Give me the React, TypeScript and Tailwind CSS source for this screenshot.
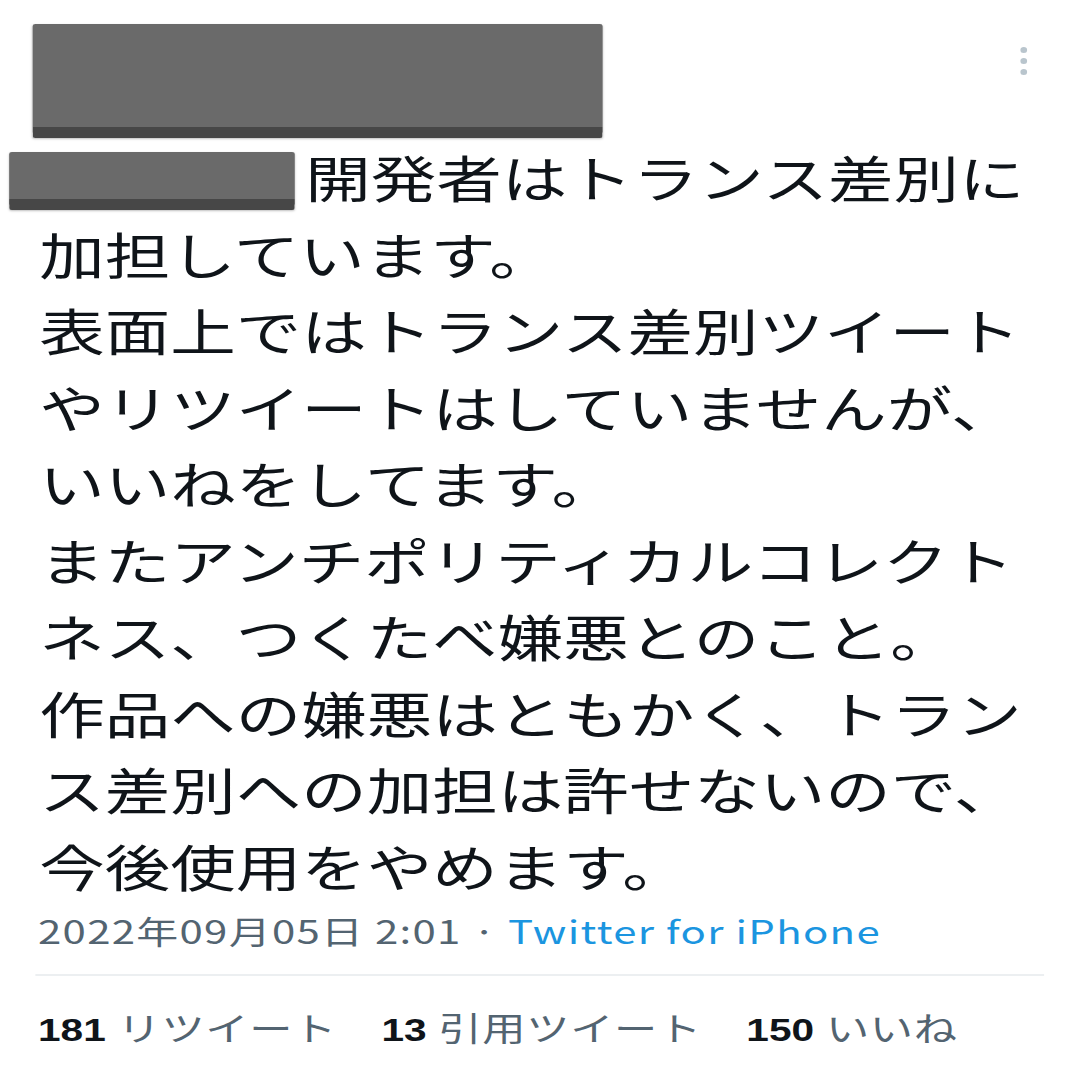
import React from "react";

const lines = [
  "加担しています。",
  "表面上ではトランス差別ツイート",
  "やリツイートはしていませんが、",
  "いいねをしてます。",
  "またアンチポリティカルコレクト",
  "ネス、つくたべ嫌悪とのこと。",
  "作品への嫌悪はともかく、トラン",
  "ス差別への加担は許せないので、",
  "今後使用をやめます。",
];

const jp = "font-['Noto_Sans_CJK_JP','Noto_Sans',sans-serif]";

const Redacted = ({ className }: { className: string }) => (
  <div
    className={`rounded-[2px] border-b-[11px] border-[#474747] bg-[#6a6a6a] shadow-[0_1px_2px_rgba(0,0,0,0.25)] ${className}`}
  />
);

const Stat = ({ value, label }: { value: string; label: string }) => (
  <div className="flex items-baseline gap-[9px]">
    <span className="font-['Liberation_Sans',sans-serif] text-[31px] font-bold text-[#0f1419]">
      {value}
    </span>
    <span className={`${jp} text-[33px] tracking-[0.5px] text-[#536471]`}>{label}</span>
  </div>
);

export default function App() {
  return (
    <div className="h-[1080px] w-[1080px] overflow-hidden bg-white">
      <div className="w-[824px] origin-top-left scale-x-[1.31]">
        <div className="flex items-start justify-between pt-[24px]">
          <Redacted className="ml-[25px] h-[114px] w-[435px]" />
          <div className="mr-[40px] mt-[23px] flex flex-col items-center gap-[5px]">
            <span className="h-[6px] w-[5px] rounded-full bg-[#b9c5cd]" />
            <span className="h-[6px] w-[5px] rounded-full bg-[#b9c5cd]" />
            <span className="h-[6px] w-[5px] rounded-full bg-[#b9c5cd]" />
          </div>
        </div>

        <div className={`${jp} pl-[30px] text-[50px] leading-[76.5px] text-[#0f1419]`}>
          <div className="-ml-[23px] flex items-center gap-[8px] whitespace-nowrap">
            <Redacted className="mt-[10px] h-[58px] w-[218px]" />
            <span>開発者はトランス差別に</span>
          </div>
          {lines.map((line) => (
            <div key={line} className="whitespace-nowrap">
              {line}
            </div>
          ))}
        </div>

        <div
          className={`${jp} mt-[5px] pl-[29px] text-[32px] leading-[44px] tracking-[1px] text-[#536471]`}
        >
          2022年09月05日 2:01 ·{" "}
          <span className="text-[#1b95e0]">Twitter for iPhone</span>
        </div>

        <div className="mx-[27px] mt-[22px] border-t-2 border-[#eceff1]" />

        <div className="flex items-center gap-[34px] pl-[29px] pt-[27px] pb-[30px]">
          <Stat value="181" label="リツイート" />
          <Stat value="13" label="引用ツイート" />
          <Stat value="150" label="いいね" />
        </div>

        <div className="mx-[27px] border-t-2 border-[#eceff1]" />
      </div>
    </div>
  );
}
